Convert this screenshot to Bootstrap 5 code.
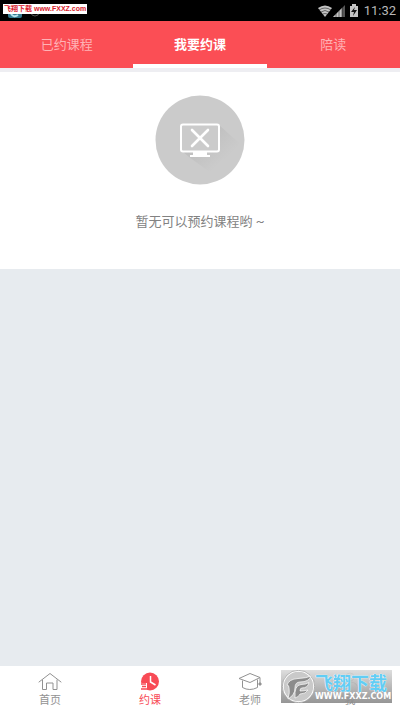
<!DOCTYPE html>
<html lang="zh-CN">
<head>
<meta charset="utf-8">
<meta name="viewport" content="width=device-width, initial-scale=1">
<title>我要约课</title>
<link href="https://cdn.jsdelivr.net/npm/bootstrap@5.3.0/dist/css/bootstrap.min.css" rel="stylesheet">
<style>
body { font-family: Roboto, "Noto Sans CJK SC", sans-serif; background: #e7ebef; font-size: 13px; line-height: 20px; }
.status-bar { background: #000; color: #b8b8b8; height: 21px; padding-right: 4px; }
.site-tag { left: 3px; top: 4px; height: 10px; padding: 0 1px; background: #fff; color: #d8202c; font: bold 7px/10px "Liberation Sans", "Noto Sans CJK SC", sans-serif; white-space: nowrap; }
.notice { left: 7px; top: 7px; }
.top-tabs { background: #fb4e55; }
.top-tabs .nav-link { color: #ffb3b5; height: 47px; padding: 14px 0 9px; border-bottom: 4px solid transparent; border-radius: 0; }
.top-tabs .nav-link.active { color: #fff; border-bottom-color: #fff; font-weight: 700; }
.empty-panel { border-top: 4px solid #eeeef2; padding: 23px 0 38px; color: #828282; }
.empty-text { margin-top: 27px; margin-bottom: -1px; }
.bottom-nav { min-height: 46px; }
.bottom-nav a { color: #929292; font-size: 11px; line-height: 14px; padding: 6px 0 4px; }
.bottom-nav a.active { color: #f84b56; }
.bottom-nav svg { margin-bottom: 3px; }
.watermark { right: 8px; bottom: 9px; width: 111px; height: 33px; background: linear-gradient(#dadadae6, #8a8a8ae6); }
.watermark-name { color: #62cdf4; font: bold 18px/20px "Noto Sans CJK SC", sans-serif; text-shadow: 0 0 1px #fff, 0 0 1px #fff; white-space: nowrap; }
.watermark-url { color: #fff; font: bold 8px/9px "DejaVu Sans", sans-serif; white-space: nowrap; }
</style>
</head>
<body class="min-vh-100 d-flex flex-column">
<header>
  <div class="status-bar position-relative d-flex align-items-center justify-content-end">
    <svg class="notice position-absolute" width="34" height="12" viewBox="0 0 34 12" aria-hidden="true"><rect x="1" width="14" height="11" rx="2" fill="#367b91"/><path d="M4 7q3 4 7 1" fill="none" stroke="#b8e5ef" stroke-width="2"/><circle cx="28" cy="5" r="4" fill="none" stroke="#555"/></svg>
    <span class="site-tag position-absolute">飞翔下载 www.FXXZ.com</span>
    <svg width="42" height="14" viewBox="0 0 42 14" class="me-1" aria-hidden="true">
      <path d="M0 4Q7-1 14 4L7 13Z" fill="#c4c4c4"/><path d="M1 6q6-4 12 0M3 8q4-3 8 0M5 10q2-1 4 0" fill="none" stroke="#222" stroke-width=".6"/>
      <path d="M15 13L27 1V13Z" fill="#555"/><path d="M15 13L24 4V13Z" fill="#c4c4c4"/><path d="M18 9v4M21 6v7M24 3v10" stroke="#111" stroke-width=".5"/>
      <path d="M32 2h2V0h4v2h2v11h-8Z" fill="#c4c4c4"/><path d="M37 3l-4 5h3l-1 4 4-6h-3Z" fill="#111"/>
    </svg>
    <span>11:32</span>
  </div>
  <nav class="top-tabs nav nav-justified flex-nowrap" aria-label="课程">
    <a class="nav-link w-100" href="#booked">已约课程</a>
    <a class="nav-link w-100 active" href="#book" aria-current="page">我要约课</a>
    <a class="nav-link w-100" href="#reading">陪读</a>
  </nav>
</header>
<main class="flex-grow-1">
  <section class="empty-panel bg-white text-center">
    <svg class="d-block mx-auto" width="90" height="90" viewBox="0 0 90 90" aria-hidden="true">
      <defs><linearGradient id="shade" x1="0" y1="0" x2="1" y2="1"><stop offset="0.3" stop-color="#bfbfbf"/><stop offset="0.7" stop-color="#cbcbcb"/></linearGradient></defs>
      <circle cx="45" cy="45" r="44.500" fill="#cbcbcb"/>
      <path d="M64 30L84 48Q79 69 63 83L34 62 26 55Z" fill="url(#shade)"/>
      <rect x="26" y="29.500" width="38" height="27" rx="2" fill="#cbcbcb" stroke="#fff" stroke-width="2"/>
      <path d="M37 35L53 51M53 35L37 51" stroke="#fff" stroke-width="2.600" stroke-linecap="round"/>
      <path d="M38 57h14v3h3v2H35v-2h3Z" fill="#fff"/>
    </svg>
    <p class="empty-text">暂无可以预约课程哟 ~</p>
  </section>
</main>
<footer class="position-relative bg-white">
  <nav class="bottom-nav row g-0 text-center" aria-label="主导航">
    <a class="col d-flex flex-column align-items-center text-decoration-none" href="#home">
      <svg width="24" height="19" viewBox="0 0 24 19" fill="none" stroke="#929292" stroke-linejoin="round" stroke-linecap="round" aria-hidden="true"><path d="M1 10L12 1.500 23 10M4.500 8v9.500h4V11h6.500v6.500h4V8"/></svg>首页
    </a>
    <a class="col d-flex flex-column align-items-center text-decoration-none active" href="#book" aria-current="page">
      <svg width="20" height="19" viewBox="0 0 20 19" aria-hidden="true"><circle cx="10" cy="9.500" r="9" fill="#f84b56"/><path d="M10.500 4v6l5 3" fill="none" stroke="#fff" stroke-width="1.500"/><path d="M0 11h7v8H0Z" fill="#fff"/><path d="M1 12h5M2 14.500h4M1 17h6" stroke="#f84b56" stroke-width="1.400"/></svg>约课
    </a>
    <a class="col d-flex flex-column align-items-center text-decoration-none" href="#teacher">
      <svg width="24" height="19" viewBox="0 0 24 19" fill="none" stroke="#929292" stroke-linejoin="round" aria-hidden="true"><path d="M1 6.500L12 1.500 22 5.500 12 10.500ZM4.500 8.500v7q7 4 15 0v-8M22 5.500v6"/><path d="M21 11h2v2h-2Z" fill="#929292"/></svg>老师
    </a>
    <a class="col d-flex flex-column align-items-center text-decoration-none" href="#me">
      <svg width="20" height="19" viewBox="0 0 20 19" fill="none" stroke="#929292" aria-hidden="true"><circle cx="10" cy="5" r="4"/><path d="M2 18q0-8 8-8t8 8"/></svg>我
    </a>
  </nav>
  <div class="watermark position-absolute d-flex align-items-center">
    <svg class="flex-shrink-0" width="34" height="33" viewBox="0 0 34 33" aria-hidden="true"><circle cx="17.500" cy="16.500" r="15.500" fill="#c9c9c9" stroke="#fff" stroke-width="1.500"/><circle cx="17.500" cy="16.500" r="16.200" fill="none" stroke="#777" stroke-width=".5"/><path d="M6 15Q8 9 17 8.500T30 6q-2 6-11 6-5 0-5 6 0 7-7 11 2-7 1-11 0-3-2-3Z" fill="#8c8c8c" stroke="#f5f5f5" stroke-width=".8"/><path d="M14 28q-1-13 6-13.500 5 0 8-2-1 5.500-7 5.500-2 0-2 3 4 0 8-1-2 4-8 4-1 3-5 4Z" fill="#8c8c8c" stroke="#f5f5f5" stroke-width=".8"/></svg>
    <div><div class="watermark-name">飞翔下载</div><div class="watermark-url">WWW.FXXZ.COM</div></div>
  </div>
</footer>
<script src="https://cdn.jsdelivr.net/npm/bootstrap@5.3.0/dist/js/bootstrap.bundle.min.js"></script>
</body>
</html>
